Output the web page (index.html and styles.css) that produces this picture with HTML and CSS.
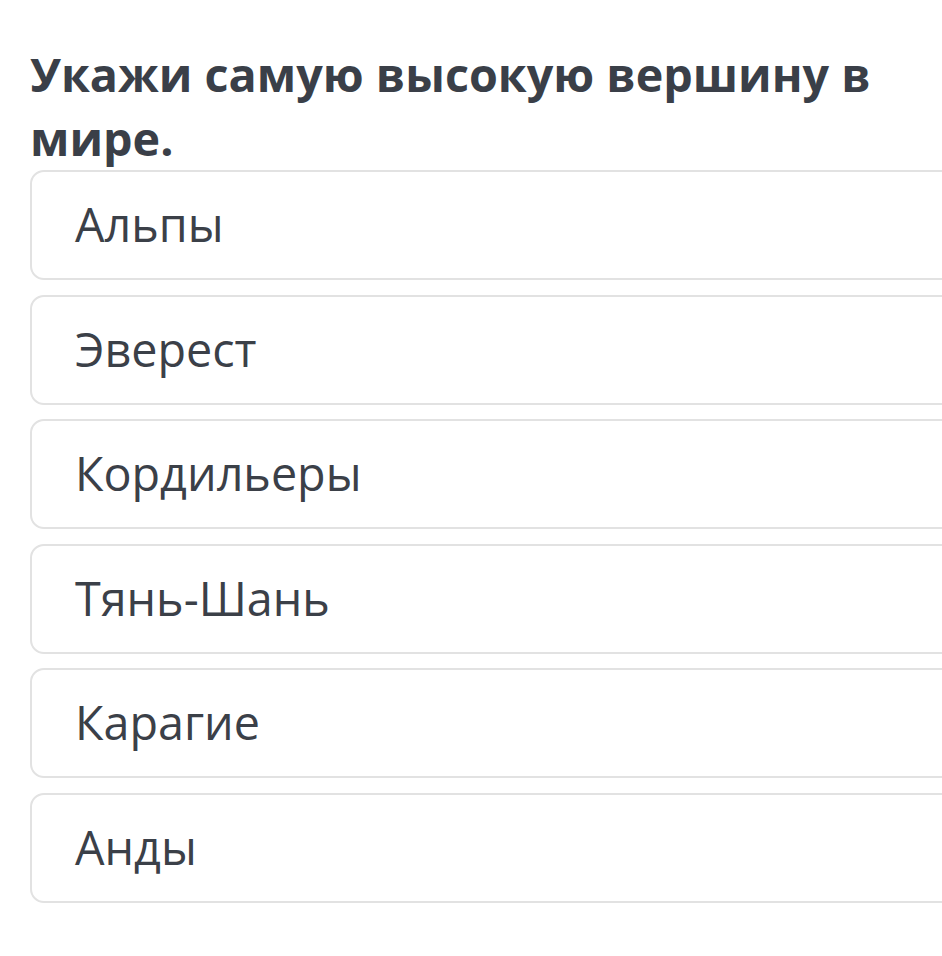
FILE: index.html
```html
<!DOCTYPE html>
<html lang="ru">
<head>
    <meta charset="UTF-8">
    <meta name="viewport" content="width=device-width, initial-scale=1.0">
    <title>Вопрос</title>
    <link rel="stylesheet" href="styles.css">
</head>
<body>
    <div class="quiz">
        <h1 class="question">Укажи самую высокую вершину в мире.</h1>
        <div class="options">
            <div class="option">Альпы</div>
            <div class="option">Эверест</div>
            <div class="option">Кордильеры</div>
            <div class="option">Тянь-Шань</div>
            <div class="option">Карагие</div>
            <div class="option">Анды</div>
        </div>
    </div>
</body>
</html>
```

FILE: styles.css
```css
html, body {
    overflow: hidden;
}
body {
    margin: 0;
    background: #ffffff;
    font-family: "Open Sans", "Noto Sans", sans-serif;
    color: #3b4048;
}
.quiz {
    padding: 42px 0 0 30px;
    width: 940px;
}
.question {
    margin: 0;
    font-size: 46.7px;
    line-height: 64px;
    font-weight: 700;
    color: #3a3f48;
    width: 880px;
}
.options {
    display: flex;
    flex-direction: column;
    gap: 14.6px;
}
.option {
    box-sizing: border-box;
    height: 110px;
    border: 2px solid #e2e2e2;
    border-radius: 14px;
    padding-left: 43px;
    padding-bottom: 2px;
    display: flex;
    align-items: center;
    font-size: 46.7px;
}
```
